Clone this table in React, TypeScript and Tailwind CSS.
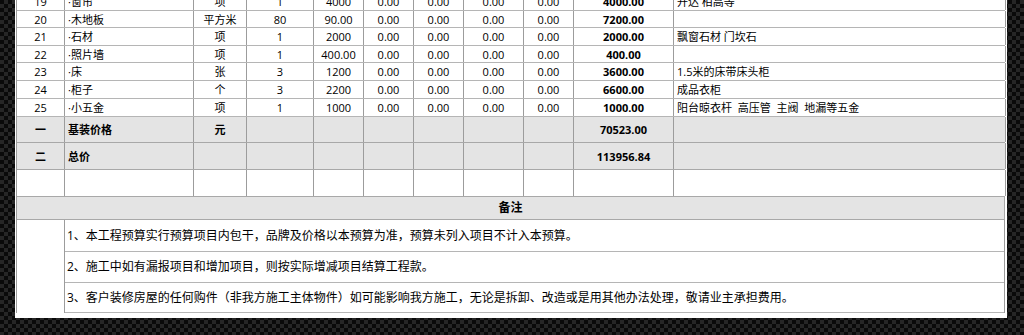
import React from "react";

const W = [
  "w-[48px]",
  "w-[129px]",
  "w-[53px]",
  "w-[67px]",
  "w-[50px]",
  "w-[50px]",
  "w-[50px]",
  "w-[60px]",
  "w-[50px]",
  "w-[100px]",
  "w-[332px]",
];

type Item = {
  n: string;
  name: string;
  unit: string;
  qty: string;
  price: string;
  total: string;
  note: string;
  h: string;
};

const items: Item[] = [
  { n: "19", name: "·窗帘", unit: "项", qty: "1", price: "4000", total: "4000.00", note: "开达 柏高等", h: "h-[18px]" },
  { n: "20", name: "·木地板", unit: "平方米", qty: "80", price: "90.00", total: "7200.00", note: "", h: "h-[17px]" },
  { n: "21", name: "·石材", unit: "项", qty: "1", price: "2000", total: "2000.00", note: "飘窗石材 门坎石", h: "h-[18px]" },
  { n: "22", name: "·照片墙", unit: "项", qty: "1", price: "400.00", total: "400.00", note: "", h: "h-[17px]" },
  { n: "23", name: "·床", unit: "张", qty: "3", price: "1200", total: "3600.00", note: "1.5米的床带床头柜", h: "h-[18px]" },
  { n: "24", name: "·柜子", unit: "个", qty: "3", price: "2200", total: "6600.00", note: "成品衣柜", h: "h-[18px]" },
  { n: "25", name: "·小五金", unit: "项", qty: "1", price: "1000", total: "1000.00", note: "阳台晾衣杆  高压管  主阀  地漏等五金", h: "h-[18px]" },
];

function Cell({
  i,
  children,
  left,
  bold,
}: {
  i: number;
  children?: React.ReactNode;
  left?: boolean;
  bold?: boolean;
}) {
  return (
    <div
      className={
        W[i] +
        " shrink-0 h-full flex items-center border-r border-[#9c9c9c] whitespace-pre overflow-hidden " +
        (left ? "justify-start pl-[3px] " : "justify-center ") +
        (bold ? "font-bold" : "")
      }
    >
      {children}
    </div>
  );
}

function ItemRow({ it }: { it: Item }) {
  return (
    <div className={"flex border-b border-[#b5b5b5] bg-white " + it.h}>
      <Cell i={0}>{it.n}</Cell>
      <Cell i={1} left>
        {it.name}
      </Cell>
      <Cell i={2}>{it.unit}</Cell>
      <Cell i={3}>{it.qty}</Cell>
      <Cell i={4}>{it.price}</Cell>
      <Cell i={5}>0.00</Cell>
      <Cell i={6}>0.00</Cell>
      <Cell i={7}>0.00</Cell>
      <Cell i={8}>0.00</Cell>
      <Cell i={9} bold>
        {it.total}
      </Cell>
      <Cell i={10} left>
        {it.note}
      </Cell>
    </div>
  );
}

function SumRow({
  idx,
  label,
  unit,
  total,
  h,
  bg,
}: {
  idx: string;
  label: string;
  unit: string;
  total: string;
  h: string;
  bg: string;
}) {
  return (
    <div className={"flex border-b border-[#a8a8a8] " + h + " " + bg}>
      <Cell i={0} bold>
        {idx}
      </Cell>
      <Cell i={1} left bold>
        {label}
      </Cell>
      <Cell i={2} bold>
        {unit}
      </Cell>
      <Cell i={3} />
      <Cell i={4} />
      <Cell i={5} />
      <Cell i={6} />
      <Cell i={7} />
      <Cell i={8} />
      <Cell i={9} bold>
        {total}
      </Cell>
      <Cell i={10} />
    </div>
  );
}

const notes = [
  { t: "1、本工程预算实行预算项目内包干，品牌及价格以本预算为准，预算未列入项目不计入本预算。", h: "h-[32px]" },
  { t: "2、施工中如有漏报项目和增加项目，则按实际增减项目结算工程款。", h: "h-[31px]" },
  { t: "3、客户装修房屋的任何购件（非我方施工主体物件）如可能影响我方施工，无论是拆卸、改造或是用其他办法处理，敬请业主承担费用。", h: "h-[30px]" },
];

export default function App() {
  return (
    <div
      className="w-[1024px] h-[335px] overflow-hidden flex flex-col justify-end pb-[17px] bg-[#121212] bg-[image:repeating-conic-gradient(#262626_0%_25%,#0a0a0a_0%_50%)] bg-[length:8px_8px]"
      style={{ fontFamily: '"Open Sans", "Noto Sans CJK SC", sans-serif' }}
    >
      <div className="ml-[15px] w-[992px] shrink-0 bg-white pl-[1px] pr-[2px] pb-[5px] text-[11px] leading-none text-black">
        <div className="border-l border-[#9c9c9c]">
          {items.map((it) => (
            <ItemRow key={it.n} it={it} />
          ))}
          <SumRow idx="一" label="基装价格" unit="元" total="70523.00" h="h-[26px]" bg="bg-[#e4e4e4]" />
          <SumRow idx="二" label="总价" unit="" total="113956.84" h="h-[27px]" bg="bg-[#e4e4e4]" />
          <SumRow idx="" label="" unit="" total="" h="h-[27px]" bg="bg-white" />
          <div className="h-[23px] flex items-center justify-center bg-[#e4e4e4] border-b border-r border-[#a8a8a8] font-bold text-[12px]">
            备注
          </div>
          <div className="flex">
            <div className="w-[48px] shrink-0 border-r border-[#9c9c9c]" />
            <div className="flex-1 flex flex-col border-r border-[#9c9c9c]">
              {notes.map((n) => (
                <div
                  key={n.h}
                  className={"flex items-center pl-[2px] border-b border-[#b5b5b5] text-[12px] whitespace-nowrap " + n.h}
                >
                  {n.t}
                </div>
              ))}
            </div>
          </div>
        </div>
      </div>
    </div>
  );
}
